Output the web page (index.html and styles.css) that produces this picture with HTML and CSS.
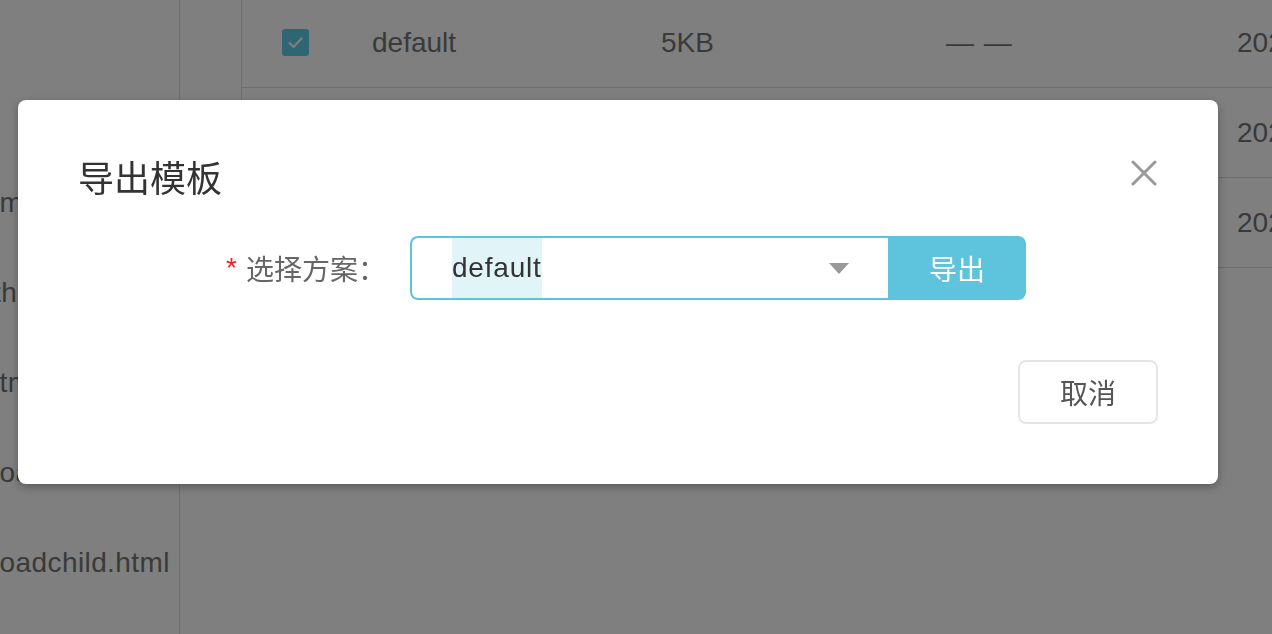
FILE: index.html
```html
<!DOCTYPE html>
<html lang="zh-CN">
<head>
<meta charset="utf-8">
<title>导出模板</title>
<link rel="stylesheet" href="styles.css">
</head>
<body>
<div class="page">
  <aside class="sidebar">
    <div class="file">import.html</div>
    <div class="file">thumb.html</div>
    <div class="file">ltmpl.html</div>
    <div class="file">loader.html</div>
    <div class="file">loadchild.html</div>
  </aside>
  <div class="gutter"></div>
  <section class="table">
    <div class="row">
      <div class="cell cell-check"><span class="checkbox"><svg viewBox="0 0 27 27" width="27" height="27"><path d="M7.5 14 L11.5 18 L19.5 9.5" fill="none" stroke="#fff" stroke-width="2.2" stroke-linecap="round" stroke-linejoin="round"/></svg></span></div>
      <div class="cell">default</div>
      <div class="cell">5KB</div>
      <div class="cell dash">— —</div>
      <div class="cell">2020-12-01 10:00</div>
    </div>
    <div class="row">
      <div class="cell cell-check"></div>
      <div class="cell">simple</div>
      <div class="cell">3KB</div>
      <div class="cell dash">— —</div>
      <div class="cell">2020-12-02 10:00</div>
    </div>
    <div class="row">
      <div class="cell cell-check"></div>
      <div class="cell">custom</div>
      <div class="cell">4KB</div>
      <div class="cell dash">— —</div>
      <div class="cell">2020-12-03 10:00</div>
    </div>
  </section>
</div>

<div class="mask">
  <div class="dialog">
    <div class="dialog-header">
      <h2 class="dialog-title">导出模板</h2>
      <button class="close" aria-label="关闭"><svg viewBox="0 0 26 26" width="26" height="26"><path d="M2 2 L24 24 M24 2 L2 24" stroke="#999" stroke-width="3" stroke-linecap="round"/></svg></button>
    </div>
    <div class="form-row">
      <label class="form-label"><span class="required">*</span>选择方案：</label>
      <div class="select">
        <span class="select-value">default</span>
        <span class="caret"></span>
      </div>
      <button class="btn-export">导出</button>
    </div>
    <div class="dialog-footer">
      <button class="btn-cancel">取消</button>
    </div>
  </div>
</div>
</body>
</html>
```

FILE: styles.css
```css
* {
  box-sizing: border-box;
}

html, body {
  margin: 0;
  padding: 0;
}

body {
  font-family: "Liberation Sans", "Noto Sans CJK SC", sans-serif;
  font-size: 28px;
  color: #333;
  width: 1272px;
  height: 634px;
  overflow: hidden;
  background: #fff;
}

.page {
  display: flex;
  height: 634px;
  overflow: hidden;
  color: #747474;
}

.sidebar {
  width: 180px;
  flex-shrink: 0;
  border-right: 1px solid #dcdcdc;
  overflow: hidden;
  padding-top: 158px;
}

.file {
  height: 90px;
  line-height: 90px;
  white-space: nowrap;
  margin-left: -7px;
  letter-spacing: 0.4px;
}

.gutter {
  width: 61px;
  flex-shrink: 0;
}

.table {
  flex: 1;
  align-self: flex-start;
  margin-top: -2px;
  border-left: 1px solid #dcdcdc;
  overflow: hidden;
}

.row {
  display: grid;
  grid-template-columns: 130px 289px 285px 291px 300px;
  height: 90px;
  border-bottom: 1px solid #dcdcdc;
  align-items: center;
  white-space: nowrap;
}

.dash {
  word-spacing: 2px;
}

.cell-check {
  padding-left: 40px;
  display: flex;
  align-items: center;
}

.checkbox {
  width: 27px;
  height: 27px;
  border-radius: 3px;
  background: #5ccce6;
  display: block;
}

.checkbox svg {
  display: block;
}

.mask {
  position: fixed;
  inset: 0;
  background: rgba(0, 0, 0, 0.5);
}

.dialog {
  position: absolute;
  left: 18px;
  top: 100px;
  width: 1200px;
  background: #fff;
  border-radius: 8px;
  padding: 60px;
  box-shadow: 0 3px 10px rgba(0, 0, 0, 0.3);
}

.dialog-header {
  display: flex;
  justify-content: space-between;
  align-items: flex-start;
  height: 38px;
}

.dialog-title {
  margin: 0;
  padding-top: 2px;
  font-size: 36px;
  line-height: 36px;
  font-weight: normal;
  color: #333;
}

.close {
  border: 0;
  padding: 0;
  margin: 0 1px 0 0;
  background: none;
  width: 26px;
  height: 26px;
}

.close svg {
  display: block;
}

.form-row {
  display: flex;
  align-items: center;
  margin-top: 38px;
  height: 64px;
}

.form-label {
  width: 308px;
  margin-right: 24px;
  display: flex;
  justify-content: flex-end;
  align-items: center;
  color: #666;
  white-space: nowrap;
}

.required {
  color: #f5222d;
  margin-right: 9px;
}

.select {
  width: 478px;
  height: 64px;
  border: 2px solid #5ec4de;
  border-right: 0;
  border-radius: 8px 0 0 8px;
  display: flex;
  align-items: stretch;
  justify-content: space-between;
  padding-left: 40px;
}

.select-value {
  background: #e1f4f8;
  color: #333;
  display: flex;
  align-items: center;
  letter-spacing: 0.8px;
}

.caret {
  align-self: center;
  width: 0;
  height: 0;
  border-left: 10px solid transparent;
  border-right: 10px solid transparent;
  border-top: 11px solid #999;
  margin-right: 39px;
}

.btn-export {
  width: 138px;
  height: 64px;
  border: 0;
  border-radius: 0 8px 8px 0;
  background: #5ec3dc;
  color: #fff;
  font: inherit;
  padding: 0;
}

.dialog-footer {
  display: flex;
  justify-content: flex-end;
  margin-top: 60px;
}

.btn-cancel {
  width: 140px;
  height: 64px;
  border: 2px solid #e6e6e6;
  border-radius: 8px;
  background: #fff;
  color: #555;
  font: inherit;
  padding: 0;
}
```
